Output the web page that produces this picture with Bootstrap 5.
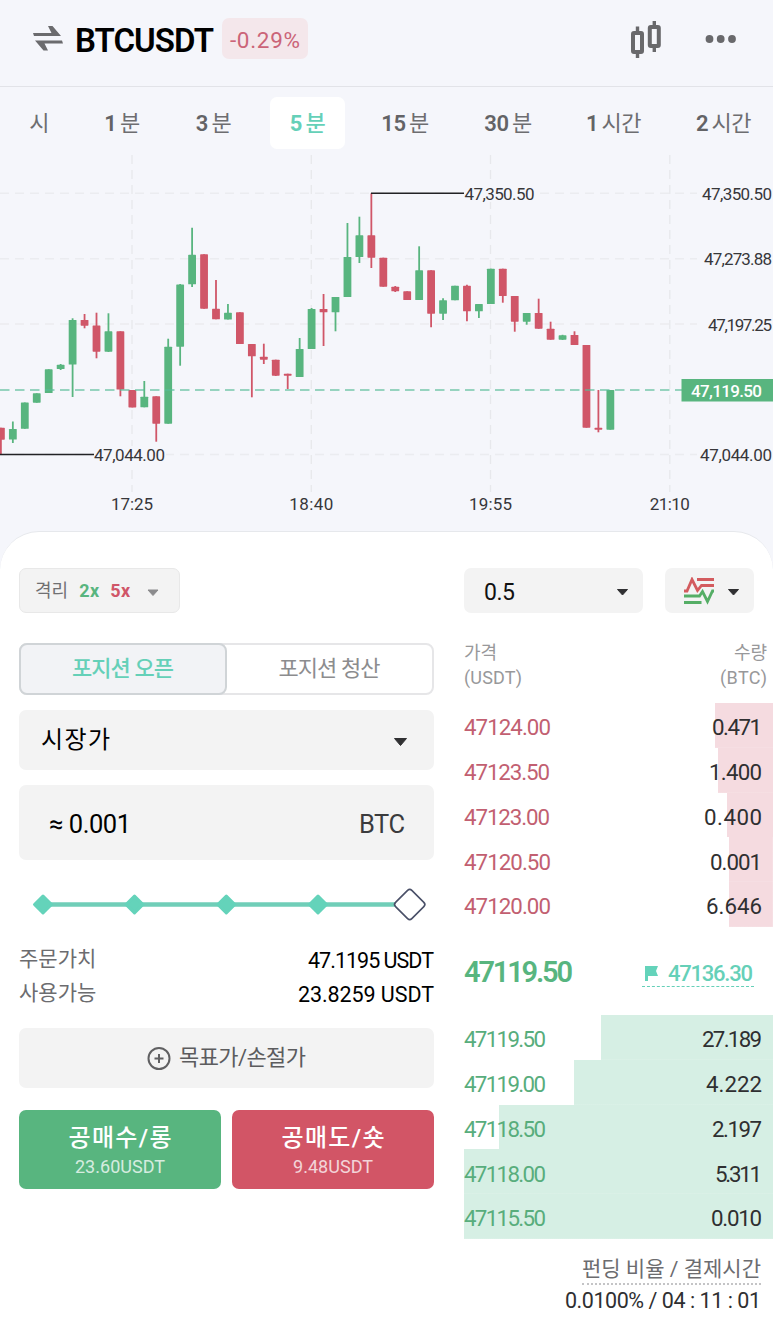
<!DOCTYPE html>
<html lang="ko">
<head>
<meta charset="utf-8">
<meta name="viewport" content="width=device-width, initial-scale=1">
<title>BTCUSDT</title>
<link href="https://cdn.jsdelivr.net/npm/bootstrap@5.3.0/dist/css/bootstrap.min.css" rel="stylesheet">
<style>
:root{--up:#58b57f;--down:#d05668;--mint:#65d0b8;--ink:#2f2f31;--soft:#f3f3f3}
body{font-family:Roboto,"Noto Sans CJK KR",sans-serif;background:#f5f6fb;color:var(--ink);width:773px;height:1319px;overflow:hidden;line-height:1}
svg{display:block;flex:none}
.fit{display:inline-block;white-space:nowrap}
.topbar{height:87px;border-bottom:1px solid #e2e3e8;padding:0 36px 0 33px}
.pair{font-size:33px;font-weight:600;color:#000;margin:-5px 0 0 12px}
.chg{width:86px;height:41px;border-radius:7px;background:#f4e7eb;color:#cb6478;font-size:22.5px;margin:-9px 0 0 8px}
.frames{display:grid;grid-template-columns:56px 70px 73px 75px 80px 86px 85px 95px;column-gap:20px;padding:10px 0 6px 11px;font-size:22px;color:#6d6d70}
.frames>div{height:52px;border-radius:7px;display:flex;align-items:center;justify-content:center;white-space:pre;word-spacing:-1.5px;letter-spacing:-.5px;padding-top:1px}
.frames b{font-weight:600;color:#636366}
.frames .on,.frames .on b{color:var(--mint);background:#fff}
.frames .on{font-weight:500}
.frames .on b{font-weight:700}
.sheet{height:788px;border-radius:39px 39px 0 0;background:#fff;border-top:1px solid #e6e8ec;padding:36px 0 0 19px}
.order{width:415px}
.book{width:309px}
.box{background:var(--soft);border-radius:7px}
.lev{width:161px;height:45px;border:1px solid #e8e8e8;font-size:18px;color:#707072;padding:0 20px 0 15px}
.seg{height:52px;margin-top:30px;border:2px solid #e6e6e8;border-radius:8px;font-size:22px;color:#8c8c8e}
.seg>div{width:205px}
.seg .on{width:208px;margin:-2px 0 -2px -2px;border:2px solid #d0d4d7;border-radius:8px;background:#f2f3f6;color:var(--mint);font-weight:500}
.kind{height:60px;margin-top:15px;font-size:24px;color:#000;padding:0 26px 0 22px}
.qty{height:75px;margin-top:15px;padding:0 29px 0 30px;font-size:25.5px;color:#000}
.info{font-size:21px;height:34px;color:#6c6c6f}
.info .fit{color:#000;font-size:21.5px}
.tpsl{height:60px;margin-top:18px;font-size:22px;color:#5c5c5e}
.trade{height:79px;border-radius:7px;color:#fff;font-size:24px;font-weight:500;padding-top:16px}
.trade .sub{font-size:18px;font-weight:400;margin-top:8px;opacity:.75}
.tick{width:179px;height:45px;font-size:23px;color:#111;padding:0 14px 0 20px}
.mode{width:89px;height:45px;margin-left:22px;padding:0 14px 0 19px}
.heads{font-size:18px;line-height:24.5px;color:#98989a;margin-top:28px;height:62px;padding-right:6px}
.lvl{height:44.8px;padding:4px 11px 0 0;font-size:22.3px;background:linear-gradient(var(--tone),var(--tone)) right/var(--depth) 100% no-repeat}
.ask{--tone:#f5dbe0;color:#c25f71}
.bid{--tone:#d6efe4;color:#58ad7c}
.lvl .fit+.fit{color:var(--ink)}
.last{height:88px;padding:4px 19px 0 0;font-size:29px;font-weight:600;color:var(--up)}
.index{font-size:22px;font-weight:500;color:var(--mint);border-bottom:1px dashed var(--mint);padding:4px 1px 1px 3px;width:112px}
.fund{padding:18px 12px 0 0}
.fund .cap{font-size:21px;line-height:24px;color:#6c6c6f;border-bottom:2px dotted #c4c4c6;padding-bottom:2px}
</style>
</head>
<body>
<header class="topbar d-flex align-items-center">
  <svg width="30" height="25" viewBox="0 0 30 25" fill="#6b6b6e" style="margin-top:-9px"><path d="M15 0h4.500L28 10H1L0 7h18.500zM15 24.400h-4.500L2 14.400h27l1 3H11.500z"/></svg>
  <div class="pair"><span class="fit" data-w="138">BTCUSDT</span></div>
  <div class="chg d-flex align-items-center justify-content-center pt-1"><span class="fit" data-w="69">-0.29%</span></div>
  <svg class="ms-auto" width="32" height="38" viewBox="0 0 32 38" fill="none" stroke="#69696c" stroke-width="4" style="margin-top:-9px"><rect x="3" y="13" width="9" height="19" rx="1"/><path stroke-width="3.400" d="M7.500 6.500v6M7.500 32.500v5.500M24.300 1v6M24.300 26v6"/><rect x="19.800" y="7" width="9" height="19" rx="1"/></svg>
  <svg width="32" height="8" viewBox="0 0 32 8" fill="#69696c" style="margin:-9px 0 0 43px"><circle cx="4.500" cy="4" r="3.900"/><circle cx="15.700" cy="4" r="3.900"/><circle cx="27" cy="4" r="3.900"/></svg>
</header>
<nav class="frames">
  <div>시</div><div><b>1</b> 분</div><div><b>3</b> 분</div><div class="on"><b>5</b> 분</div><div><b>15</b> 분</div><div><b>30</b> 분</div><div><b>1</b> 시간</div><div><b>2</b> 시간</div>
</nav>
<svg id="chart" width="773" height="376" viewBox="0 155 773 376" font-size="17" fill="#37373a"></svg>

<main class="sheet d-flex">
  <section class="order">
    <div class="box lev d-flex align-items-center">
      <span>격리</span>
      <span class="fit fw-bold" data-w="19" style="color:var(--up);margin-left:11px">2x</span>
      <span class="fit fw-bold" data-w="19" style="color:var(--down);margin-left:11px">5x</span>
      <svg class="ms-auto mt-1" width="12" height="8" viewBox="0 0 12 8"><path d="M1 1h10L6 6.500z" fill="#8b8b8d" stroke="#8b8b8d" stroke-linejoin="round"/></svg>
    </div>
    <div class="seg d-flex">
      <div class="on d-flex align-items-center justify-content-center"><span class="fit" data-w="101">포지션 오픈</span></div>
      <div class="d-flex align-items-center justify-content-center"><span class="fit" data-w="101">포지션 청산</span></div>
    </div>
    <div class="box kind d-flex align-items-center justify-content-between"><span class="fit" data-w="68">시장가</span>
      <svg class="mt-1" width="15" height="10" viewBox="0 0 15 10"><path d="M1.500 1.500h12l-6 7z" fill="#303032" stroke="#303032" stroke-linejoin="round"/></svg></div>
    <div class="box qty d-flex align-items-center justify-content-between">
      <span class="pt-1"><span class="fit" data-w="81">≈ 0.001</span></span><span class="fit pt-1" data-w="45" style="color:#3b3b3d">BTC</span></div>
    <svg width="415" height="82" viewBox="0 0 415 82"><path d="M24 44.500h366" stroke="#70ceb8" stroke-width="4.500"/>
      <g fill="#64d3ba" stroke="#64d3ba" stroke-width="3" stroke-linejoin="round"><path id="d" d="M24 36l8.500 8.500L24 53l-8.500-8.500z"/><use href="#d" x="91.500"/><use href="#d" x="183.300"/><use href="#d" x="275"/></g>
      <rect x="379.200" y="33" width="23" height="23" rx="3" transform="rotate(45 390.700 44.500)" fill="#fff" stroke="#4a5068" stroke-width="1.600"/></svg>
    <div class="info d-flex justify-content-between align-items-center"><span>주문가치</span><span class="fit pt-1" data-w="125">47.1195 USDT</span></div>
    <div class="info d-flex justify-content-between align-items-center"><span>사용가능</span><span class="fit pt-1" data-w="135">23.8259 USDT</span></div>
    <div class="box tpsl d-flex align-items-center justify-content-center"><svg class="me-2" width="24" height="24" viewBox="0 0 24 24" fill="none" stroke="#606062" stroke-width="2"><circle cx="12" cy="12.500" r="10.500"/><path d="M7.500 12.500h9M12 8v9"/></svg><span class="fit" data-w="126">목표가/손절가</span></div>
    <div class="d-flex justify-content-between" style="margin-top:22px">
      <div class="trade text-center" style="background:var(--up);width:202px"><span class="fit" data-w="102">공매수/롱</span><div class="sub"><span class="fit" data-w="89">23.60USDT</span></div></div>
      <div class="trade text-center" style="background:#d25566;width:202px"><span class="fit" data-w="102">공매도/숏</span><div class="sub"><span class="fit" data-w="79">9.48USDT</span></div></div>
    </div>
  </section>
  <section class="book ms-auto">
    <div class="d-flex">
      <div class="box tick d-flex align-items-center justify-content-between"><span class="fit pt-1" data-w="30">0.5</span><svg class="mt-1" width="13" height="9" viewBox="0 0 13 9"><path d="M1.500 1.500h10l-5 5.500z" fill="#303032" stroke="#303032" stroke-linejoin="round"/></svg></div>
      <div class="box mode d-flex align-items-center justify-content-between"><svg width="31" height="28" viewBox="0 0 31 28" fill="none" stroke-width="2.800"><path stroke="#d35b5e" d="M0 14h3L8 2.500l5.500 11 4-5H30M13 2.500h17"/><path stroke="#55ae66" d="M0 19h15.500l3-4.500 5 10 5-10.500H30M0 25.500h17.500"/></svg><svg class="mt-1" width="13" height="9" viewBox="0 0 13 9"><path d="M1.500 1.500h10l-5 5.500z" fill="#303032" stroke="#303032" stroke-linejoin="round"/></svg></div>
    </div>
    <div class="heads d-flex justify-content-between"><div>가격<br><span class="fit" data-w="57">(USDT)</span></div><div class="text-end">수량<br><span class="fit" data-w="46">(BTC)</span></div></div>
    <div class="lvl ask d-flex justify-content-between align-items-center" style="--depth:18.8%"><span class="fit" data-w="86">47124.00</span><span class="fit" data-w="49">0.471</span></div>
    <div class="lvl ask d-flex justify-content-between align-items-center" style="--depth:17.8%"><span class="fit" data-w="85">47123.50</span><span class="fit" data-w="52">1.400</span></div>
    <div class="lvl ask d-flex justify-content-between align-items-center" style="--depth:14.9%"><span class="fit" data-w="85">47123.00</span><span class="fit" data-w="57">0.400</span></div>
    <div class="lvl ask d-flex justify-content-between align-items-center" style="--depth:14.2%"><span class="fit" data-w="86">47120.50</span><span class="fit" data-w="51">0.001</span></div>
    <div class="lvl ask d-flex justify-content-between align-items-center" style="--depth:14.2%"><span class="fit" data-w="86">47120.00</span><span class="fit" data-w="55">6.646</span></div>
    <div class="last d-flex align-items-center justify-content-between"><span class="fit" data-w="108">47119.50</span>
      <span class="index d-flex justify-content-between align-items-center"><svg width="13" height="15" viewBox="0 0 13 15" fill="#64d3ba"><path d="M0 0h13l-2 5 2 5H3v5H0z"/></svg><span class="fit" data-w="84">47136.30</span></span></div>
    <div class="lvl bid d-flex justify-content-between align-items-center" style="--depth:55.7%"><span class="fit" data-w="81">47119.50</span><span class="fit" data-w="59">27.189</span></div>
    <div class="lvl bid d-flex justify-content-between align-items-center" style="--depth:64.4%"><span class="fit" data-w="81">47119.00</span><span class="fit" data-w="55">4.222</span></div>
    <div class="lvl bid d-flex justify-content-between align-items-center" style="--depth:88.8%"><span class="fit" data-w="81">47118.50</span><span class="fit" data-w="49">2.197</span></div>
    <div class="lvl bid d-flex justify-content-between align-items-center" style="--depth:100%"><span class="fit" data-w="81">47118.00</span><span class="fit" data-w="46">5.311</span></div>
    <div class="lvl bid d-flex justify-content-between align-items-center" style="--depth:100%"><span class="fit" data-w="81">47115.50</span><span class="fit" data-w="50">0.010</span></div>
    <div class="fund d-flex flex-column align-items-end"><div class="cap"><span class="fit" data-w="178">펀딩 비율 / 결제시간</span></div>
      <div style="font-size:21.5px;margin-top:5px"><span class="fit" data-w="195">0.0100% / 04 : 11 : 01</span></div></div>
  </section>
</main>
<script src="https://cdn.jsdelivr.net/npm/bootstrap@5.3.0/dist/js/bootstrap.bundle.min.js"></script>
<script>
// Each candle: colour, wick top, body top, body bottom, wick bottom
const candles = [
['r',427.7,427.7,439.7,454],['g',421.5,429,439.5,443],['g',402.5,402.5,428.8,428.8],['g',393.3,393.3,402.7,402.7],
['g',369.3,369.3,393,393],['g',364,364.8,369,370],['g',318.3,320,364.5,397],['r',314,320,325.7,328.3],
['r',312.7,325.5,351.7,358.3],['g',313.3,331.3,351.7,352],['r',331.3,331.3,389.5,396.3],['r',390,390,407.4,407.4],
['g',381,396.7,407.3,407.3],['r',396.3,396.3,423.7,441.7],['g',338.7,346.7,423.7,423.7],['g',284,284.5,346.7,365.7],
['g',227.7,254.7,284.3,287],['r',254.3,254.3,308.7,308.7],['r',280,308.7,319.3,319.3],['g',304,312.7,319.5,319.5],
['r',312.3,312.3,344,344],['r',344,344,356.3,397.3],['r',343.7,356.7,359.7,364],['r',359.7,359.7,375.7,376],
['r',373.7,373.7,375.7,389],['g',338,349,377,377],['g',308,309,349,349],['r',294,309,312.3,346],
['g',297,297,312.3,331.3],['g',223,257,297,297],['g',216.7,235.3,257,263],['r',193.3,235.3,257.7,268],
['r',257.7,257.7,286.7,286.7],['r',286,286.7,291.3,292],['r',291.3,291.3,300,300],['g',246.3,270.3,300,300],
['r',270.3,270.3,313.7,327.3],['g',298.3,300.3,313.7,320],['g',285.7,285.7,300.3,300.3],['r',284.7,285.7,311.3,321.3],
['g',304,304,311.3,318],['g',268.7,268.7,304,304],['r',268.7,268.7,296,302.7],['r',296,296,321.7,331.7],
['g',313,313,321.7,324.7],['r',298.7,313,328.7,328.7],['r',321.7,328.7,339.7,339.7],['g',334.8,335.3,339.7,340],
['r',331.3,335,345,345],['r',345,345,427.7,427.7],['r',390,427.7,429.7,432.3],['g',390,390,429.7,429.7]];
const xs = [132,311.3,490.5,669.8], times = ['17:25','18:40','19:55','21:10'];
const levels = [[193.3,'47,350.50',70],[258.7,'47,273.88',68],[324,'47,197.25',64],[454.5,'47,044.00',72]];
let s = '';
const t = (x,y,txt,w,extra='') => `<text x="${x}" y="${y}" textLength="${w}" ${extra}>${txt}</text>`;
for (const [y] of levels) s += `<path d="M0 ${y}H697" stroke="#ebecf0" stroke-width="1.5" stroke-dasharray="9 6"/>`;
for (const x of xs) s += `<path d="M${x} 155V492" stroke="#e7e8ec" stroke-width="1.300" stroke-dasharray="9 6"/>`;
candles.forEach(([c,h,a,b,l],i) => {
  const x = .9 + 11.95*i, f = c === 'g' ? '#58b57f' : '#d05668';
  s += `<path d="M${x} ${h}V${l}" stroke="${f}" stroke-width="1.800"/><rect x="${x-3.9}" y="${a}" width="7.800" height="${b-a}" rx=".6" fill="${f}"/>`;
});
s += '<path d="M0 390H682" stroke="#58bd98" stroke-opacity=".8" stroke-width="1.500" stroke-dasharray="9.500 5.500"/>';
s += '<path d="M0 454.500H94M371 193.300H465" stroke="#222225" stroke-width="1.500"/>';
s += '<rect x="464" y="184" width="72" height="18" fill="#f5f6fb"/><rect x="94" y="446" width="72" height="18" fill="#f5f6fb"/>';
s += t(464.5,200,'47,350.50',70) + t(94,461,'47,044.00',71);
for (const [y,n,w] of levels) s += t(772-w,y+6.5,n,w);
xs.forEach((x,i) => { const w=[42,44,43,40][i]; s += t(x-w/2,510,times[i],w); });
s += '<rect x="681.500" y="379" width="91.500" height="22.500" fill="#58b57f"/>' + t(691,397,'47,119.50',71,'fill="#fff" font-weight="500"');
document.getElementById('chart').innerHTML = s;

document.querySelectorAll('.fit').forEach(e => {
  const w = +e.dataset.w, n = e.textContent.length;
  const ls = (w + 1 - e.getBoundingClientRect().width) / (n - 1);
  e.style.letterSpacing = ls + 'px';
  e.style.marginRight = -ls + 'px';
});
</script>
</body>
</html>
